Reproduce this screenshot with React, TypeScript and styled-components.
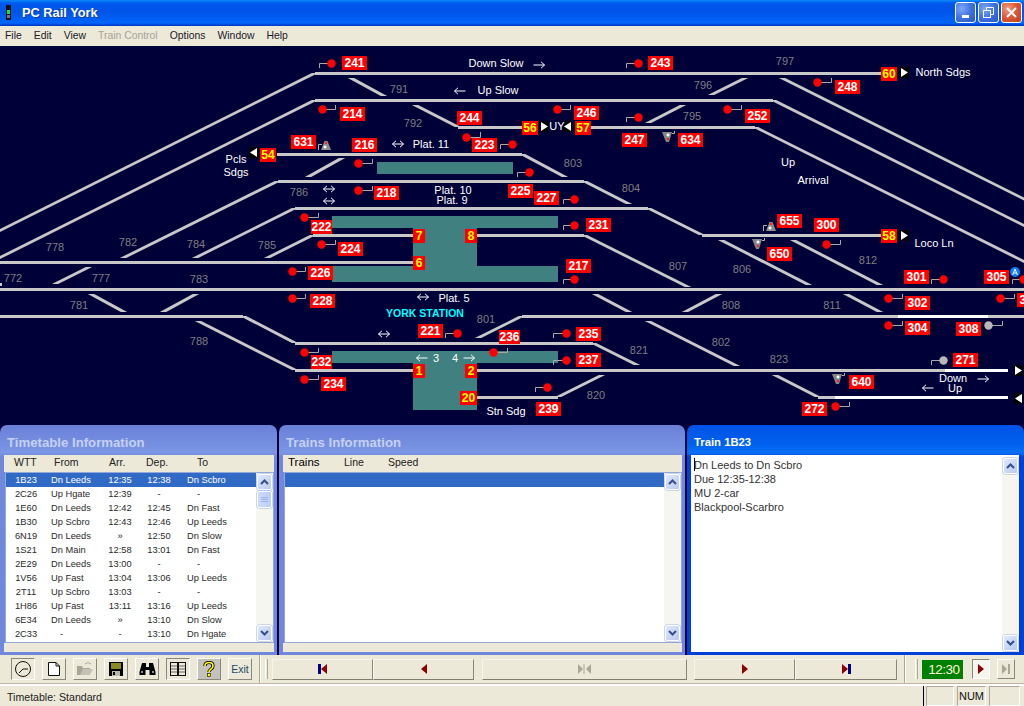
import React from "react";
import styled, { createGlobalStyle, css } from "styled-components";

const Global = createGlobalStyle`
  html, body { margin: 0; padding: 0; background: #ece9d8; }
  * { box-sizing: border-box; }
  body { font-family: "Liberation Sans", Arial, sans-serif; overflow: hidden; }
`;

const Win = styled.div`
  width: 1024px; height: 706px; display: flex; flex-direction: column; overflow: hidden; background: #ece9d8;
`;
const TitleBar = styled.div`
  height: 26px; flex: none; display: flex; align-items: center; padding: 0 2px 1px 5px;
  background: linear-gradient(180deg,#0a8cf8 0,#0058ee 12%,#0054e8 45%,#0064fb 86%,#005af0 92%,#0040cc 96%,#003cc4 100%);
`;
const TitleText = styled.div`
  font-weight: bold; font-size: 12.8px; color: #fff; margin-left: 9px; flex: 1; text-shadow: 1px 1px 0 #0a3ca8;
`;
const WinBtn = styled.div<{ $close?: boolean }>`
  width: 21px; height: 21px; margin-left: 2px; border: 1px solid #fff; border-radius: 3px; display: flex; align-items: center; justify-content: center;
  background: ${p => p.$close
    ? "radial-gradient(circle at 30% 30%, #f0a088 0, #dc5a38 45%, #c03c18 100%)"
    : "radial-gradient(circle at 30% 30%, #7ea8f4 0, #3f72e0 50%, #2a55c8 100%)"};
`;
const MenuBar = styled.div`
  height: 20px; flex: none; display: flex; gap: 12px; align-items: center; padding: 0 0 1px 5px; font-size: 10.4px; color: #1a1a2a; background: #ece9d8;
`;
const MenuItem = styled.span<{ $off?: boolean }>`
  color: ${p => p.$off ? "#a5a39a" : "#1a1a2a"};
`;

const Canvas = styled.div`
  height: 379px; flex: none; position: relative; overflow: hidden; background: #000038;
`;
const Drawing = styled.svg`
  position: absolute; left: 0; top: 0; width: 1024px; height: 379px;
`;
const Tag = styled.div.attrs<{ $x: number; $y: number; $w?: number }>(p => ({
  style: { left: p.$x, top: p.$y - 46, width: p.$w ?? 25 },
}))<{ $x: number; $y: number; $w?: number; $gold?: boolean }>`
  position: absolute; height: 14px; background: #ff0000; text-align: center; font-weight: bold; font-size: 12px; line-height: 14px;
  color: ${p => p.$gold ? "#ffff00" : "#fff"};
`;
const Caption = styled.div.attrs<{ $x: number; $y: number }>(p => ({
  style: { left: p.$x, top: p.$y - 46 },
}))<{ $x: number; $y: number; $kind?: "num" | "cyan" }>`
  position: absolute; transform: translate(-50%, -50%); white-space: nowrap; font-size: 11px; line-height: 12px;
  color: ${p => p.$kind === "num" ? "#7f7f7f" : p.$kind === "cyan" ? "#00ffff" : "#fff"};
  ${p => p.$kind === "cyan" && css`font-weight: bold; font-size: 10.5px;`}
`;

const PanelRow = styled.div`
  height: 230px; flex: none; display: flex; gap: 2px; background: #000038;
`;
const Panel = styled.div<{ $w: number; $active?: boolean }>`
  width: ${p => p.$w}px; flex: none; display: flex; flex-direction: column; border-radius: 7px 7px 0 0; padding: 0 3px 3px 4px;
  background: ${p => p.$active
    ? "linear-gradient(180deg,#0052e6 0,#0062ee 9%,#0a70f6 12%,#0040d8 14%,#0040d8 100%)"
    : "linear-gradient(180deg,#6a80d8 0,#7a96e4 12%,#6f88dc 14%,#6f88dc 100%)"};
`;
const PanelTitle = styled.div<{ $active?: boolean }>`
  height: 30px; flex: none; display: flex; align-items: center; padding: 4px 0 0 ${p => p.$active ? 3 : 3}px; font-weight: bold;
  font-size: ${p => p.$active ? "11.3px" : "13.2px"};
  color: ${p => p.$active ? "#fff" : "#c5d0f2"};
`;
const ColHead = styled.div`
  height: 17px; flex: none; display: flex; align-items: center; padding-bottom: 3px; background: #ece9d8; font-size: 10.5px; color: #222;
`;
const HeadCell = styled.span<{ $w?: number; $pad?: number; $strong?: boolean }>`
  width: ${p => p.$w ? `${p.$w}px` : "auto"};
  padding-left: ${p => p.$pad ?? 0}px;
  ${p => p.$strong && css`color: #000; font-size: 11.5px;`}
  flex: none;
`;
const ListWrap = styled.div`
  flex: 1; min-height: 0; display: flex; background: #fff; border: 1px solid #93a8d8; margin: 0 0 0 1px;
`;
const Rows = styled.div`
  flex: 1; min-width: 0;
`;
const Row = styled.div<{ $sel?: boolean }>`
  height: 14px; display: grid; grid-template-columns: 40px 50px 48px 30px 1fr; align-items: center; font-size: 9.3px; margin-left: 0;
  background: ${p => p.$sel ? "#316ac5" : "transparent"};
  color: ${p => p.$sel ? "#fff" : "#2a2a2a"};
`;
const Mid = styled.span`
  text-align: center;
`;
const Lft = styled.span<{ $pad: number }>`
  padding-left: ${p => p.$pad}px; white-space: nowrap;
`;
const BlankSel = styled.div`
  height: 14px; background: #316ac5;
`;
const Strip = styled.div`
  height: 9px; flex: none; background: #ece9d8; border-left: 1px solid #ece9d8;
`;
const SB = styled.div`
  width: 17px; flex: none; display: flex; flex-direction: column; background: #f6f6f0; padding: 1px;
`;
const SBBtn = styled.div`
  width: 15px; height: 16px; flex: none; display: flex; align-items: center; justify-content: center; border: 1px solid #fff; border-radius: 2px;
  background: linear-gradient(135deg,#dfe8fb,#b8c9f0);
  box-shadow: 0 0 0 0.5px #9db4e6;
`;
const SBTrack = styled.div`
  flex: 1; min-height: 0;
`;
const SBThumb = styled.div`
  width: 15px; height: 17px; margin-top: 1px; border: 1px solid #fff; border-radius: 2px; background: linear-gradient(90deg,#cddafa,#bccdf4);
  box-shadow: 0 0 0 0.5px #9db4e6; display: flex; flex-direction: column; align-items: center; justify-content: center; gap: 1px;
  i { display: block; width: 7px; height: 1px; background: #eef3ff; border-bottom: 1px solid #9fb4e6; }
`;
const NoteBox = styled.div`
  flex: 1; min-height: 0; display: flex; background: #fff; margin-right: 2px; border-top: 2px solid #fff;
`;
const Note = styled.div`
  flex: 1; padding: 1px 0 0 3px; font-size: 11px; line-height: 14px; color: #333;
`;
const NoteLine = styled.div`
  white-space: nowrap;
`;
const Caret = styled.span`
  display: inline-block; width: 1px; height: 13px; background: #000; vertical-align: -2px; margin-right: -1px;
`;

const Tools = styled.div`
  height: 29px; flex: none; display: flex; align-items: center; background: #ece9d8; border-bottom: 1px solid #b8b5a2; box-shadow: 0 1px 0 #fff;
`;
const ToolGroup = styled.div`
  width: 252px; padding-left: 11px; display: flex; gap: 7px; flex: none;
`;
const ToolBtn = styled.div<{ $down?: boolean; $hatch?: boolean }>`
  width: 24px; height: 22px; display: flex; align-items: center; justify-content: center; font-size: 10.5px; color: #1c4a6a;
  border: 1px solid; border-color: ${p => p.$down ? "#8a887c #fff #fff #8a887c" : "#fff #8a887c #8a887c #fff"};
  background: ${p => p.$hatch ? "#c4c2bb" : "#ece9d8"};
`;
const Divider = styled.div<{ $ml: number }>`
  width: 2px; height: 28px; flex: none; margin-left: ${p => p.$ml}px; border-left: 1px solid #aca899; border-right: 1px solid #fff;
`;
const Grip = styled.div<{ $ml: number }>`
  width: 3px; height: 20px; flex: none; margin-left: ${p => p.$ml}px; border-left: 1px solid #fff; border-right: 1px solid #aca899;
`;
const NavBtn = styled.div<{ $w: number; $ml?: number }>`
  width: ${p => p.$w}px; height: 21px; flex: none; margin-left: ${p => p.$ml ?? 0}px; display: flex; align-items: center; justify-content: center;
  border: 1px solid; border-color: #f6f5ee #8a887c #7f7d70 #f6f5ee; background: #ece9d8;
`;
const Clock = styled.div`
  width: 41px; height: 19px; flex: none; margin-left: 4px; padding-left: 3px; background: #008000; color: #fff8d8; font-size: 13.5px; letter-spacing: -.5px;
  display: flex; align-items: center; justify-content: center;
`;
const RunBtn = styled.div<{ $ml: number; $down?: boolean }>`
  width: 18px; height: 20px; flex: none; margin-left: ${p => p.$ml}px; display: flex; align-items: center; justify-content: center; border: 1px solid;
  border-color: ${p => p.$down ? "#8a887c #fff #fff #8a887c" : "#fff #8a887c #8a887c #fff"};
  background: ${p => p.$down ? "#f6f5ee" : "#ece9d8"};
`;
const Status = styled.div`
  height: 21px; flex: none; display: flex; align-items: center; margin-top: 1px; font-size: 10.6px; color: #222; background: #ece9d8; border-top: 1px solid #fff;
`;
const StatusMain = styled.div`
  width: 924px; padding: 2px 0 0 7px; flex: none; height: 100%; display: flex; align-items: center; border-right: 1px solid #000;
`;
const Pane = styled.div<{ $w: number; $ml: number }>`
  width: ${p => p.$w}px; height: 100%; flex: none; margin-left: ${p => p.$ml}px; border: 1px solid; border-color: #aca899 #fff #fff #aca899;
  display: flex; align-items: center; justify-content: center; font-size: 11px; color: #111;
`;

type D = [number, number, number, number];
const diags: D[] = [
  [315,73,-5,233],[315,100,-5,260],[278,181,123,258],[295,208,195,258],[313,235,267,258],
  [342,158,308,177],[351,78,384,96],[415,105,458,127],[522,154,565,177],[584,181,629,204],
  [648,208,702,235],[584,235,688,287],[773,100,1033,230],[755,127,1035,267],[782,78,1040,207],
  [711,95,745,78],[648,123,683,105],[55,284,89,267],[91,294,124,312],[163,312,196,294],
  [595,294,629,312],[685,312,719,294],[846,294,880,312],[721,240,809,285],[793,240,880,285],
  [648,321,737,366],[775,375,818,397],[593,343,637,365],[243,316,295,343],[295,370,198,321],
  [522,316,478,338],[558,397,602,375],
];
type H = [number, number, number, boolean?];
const horiz: H[] = [
  [315,881,73],[315,773,100],[458,522,127],[591,755,127],[277,522,154],[278,584,181],[295,648,208],
  [313,413,235],[477,584,235],[702,881,235],[0,413,262],[0,1024,289],[0,243,316],[522,898,316],
  [898,988,316,true],[988,1024,316],[295,593,343],[295,413,370],[477,945,370],[945,1008,370,true],
  [477,558,397],[818,835,397],[835,1008,397,true],[0,2,284],
];
const plats: D[] = [[377,162,136,12],[332,216,226,12],[413,228,64,38],[332,266,226,16],[332,351,226,12],[413,351,64,59]];
type S = [number, number, number, number, boolean?];
const signals: S[] = [
  [331,63,319,68],[322,109,335,105],[638,63,626,68],[557,109,570,105],[466,137,480,132],[512,144,500,149],
  [638,117,626,122],[358,163,372,159],[529,172,517,177],[358,190,372,186],[574,199,563,204],[574,225,563,230],
  [817,82,831,78],[727,109,741,105],[304,217,318,213],[321,244,335,240],[292,271,305,267],[292,298,305,294],
  [304,352,318,348],[304,379,318,375],[574,279,563,284],[457,333,445,338],[493,352,507,348],[566,333,553,338],
  [566,360,553,365],[547,387,535,392],[826,244,840,240],[943,279,931,284],[1023,279,1012,284],[888,298,902,294],
  [1000,298,1014,294],[888,325,902,321],[988,325,1002,321,true],[943,360,931,365,true],[835,406,849,402],
];
type T = [string, number, number, number?, boolean?];
const tags: T[] = [
  ["241",342,56],["243",648,56],["214",340,107],["246",574,106],["244",457,111],["56",522,121,16,true],["57",575,121,16,true],
  ["247",622,133],["223",472,138],["216",352,138],["218",374,186],["225",508,184],["227",534,191],["231",586,218],["631",291,135],
  ["54",260,148,16,true],["60",881,67,16,true],["248",835,80],["252",745,109],["634",678,133],["222",311,220,21],["224",338,242],
  ["226",308,266],["228",310,294],["232",311,355,21],["234",321,377],["7",413,229,12,true],["8",465,229,12,true],["6",413,256,12,true],
  ["1",413,364,12,true],["2",465,364,12,true],["20",460,391,17,true],["217",566,259],["221",418,324],["236",499,330,21],["235",576,327],
  ["237",576,353],["239",536,402],["655",777,214],["300",814,218],["58",881,229,16,true],["650",767,247],["301",904,270],["305",984,270],
  ["302",905,296],["303",1017,293],["304",905,321],["308",956,322],["271",953,353],["640",849,375],["272",802,402],
];
const nums: [string, number, number][] = [
  ["791",399,89],["792",413,123],["803",573,163],["804",631,188],["797",785,61],["796",703,85],["795",692,116],["786",299,192],
  ["778",55,247],["782",128,242],["784",196,244],["785",267,245],["772",13,278],["777",101,278],["783",199,279],["781",79,305],
  ["788",199,341],["801",486,319],["821",639,350],["820",596,395],["807",678,266],["806",742,269],["812",868,260],["808",731,305],
  ["811",832,305],["802",721,342],["823",779,359],
];
const words: [string, number, number][] = [
  ["Down Slow",496,63],["Up Slow",498,90],["UY",557,126],["Plat. 11",431,144],["Plat. 10",453,190],["Plat. 9",452,200],
  ["North Sdgs",943,72],["Up",788,162],["Arrival",813,180],["Pcls",236,159],["Sdgs",236,172],["Loco Ln",934,243],["Plat. 5",454,298],
  ["3",436,358],["4",455,358],["Stn Sdg",506,411],["Down",953,378],["Up",955,388],
];
type A = [number, number, "l" | "r" | "b"];
const arrows: A[] = [
  [539,65,"r"],[460,91,"l"],[398,144,"b"],[329,189,"b"],[329,201,"b"],[423,297,"b"],[384,334,"b"],[422,358,"l"],[469,358,"r"],[983,379,"r"],[928,388,"l"],
];
type E = [number, number, "l" | "r"];
const ends: E[] = [[250,148,"l"],[541,122,"r"],[564,122,"l"],[901,68,"r"],[901,231,"r"],[1015,366,"r"],[1015,394,"l"]];
const shunts: [number, number, boolean][] = [[326,146,true],[771,227,true],[667,137,false],[757,244,false],[837,379,false]];

const Arrow = ({ a }: { a: A }) => {
  const [x, y, d] = a;
  const l = x - 5.5, r = x + 5.5;
  const head = (tip: number, s: number) => `M${tip + s * 3.5} ${y - 3.2}L${tip} ${y}L${tip + s * 3.5} ${y + 3.2}`;
  return (
    <path fill="none" stroke="#fff" strokeWidth="1"
      d={`M${l} ${y}H${r}${d !== "r" ? head(l, 1) : ""}${d !== "l" ? head(r, -1) : ""}`} />
  );
};
const EndMark = ({ e }: { e: E }) => {
  const [x, y, d] = e;
  const pts = d === "r" ? `${x},${y} ${x + 7},${y + 4.5} ${x},${y + 9}` : `${x + 7},${y} ${x},${y + 4.5} ${x + 7},${y + 9}`;
  return (
    <g>
      <rect x={x - 1} y={y - 1} width={9} height={11} fill="#000" />
      <polygon points={pts} fill="#fff" />
    </g>
  );
};
const Shunt = ({ s }: { s: [number, number, boolean] }) => {
  const [x, y, up] = s;
  return up ? (
    <g>
      <polygon points={`${x - 1.5},${y - 5} ${x + 1.5},${y - 5} ${x + 5},${y + 4} ${x - 5},${y + 4}`} fill="#8c8c8c" />
      <path d={`M${x - 4} ${y - 1.5}H${x - 7.5}V${y + 4}`} fill="none" stroke="#b0b0b0" strokeWidth="1" />
      <rect x={x - 1} y={y - 4} width={2} height={2} fill="#ff2020" />
      <rect x={x - 2} y={y} width={2} height={2} fill="#fff" />
      <path d={`M${x - 3} ${y + 1}H${x + 1}M${x - 1} ${y - 1}V${y + 3}`} stroke="#fff" strokeWidth=".7" />
    </g>
  ) : (
    <g>
      <polygon points={`${x - 5},${y - 5} ${x + 5},${y - 5} ${x + 2},${y + 5} ${x - 1},${y + 5}`} fill="#858585" />
      <path d={`M${x + 5} ${y - 3.5}H${x + 7.5}V${y - 6}`} fill="none" stroke="#b0b0b0" strokeWidth="1" />
      <rect x={x} y={y - 3} width={2} height={2} fill="#fff" />
      <path d={`M${x - 1} ${y - 2}H${x + 3}M${x + 1} ${y - 4}V${y}`} stroke="#fff" strokeWidth=".7" />
      <rect x={x} y={y + 1} width={2} height={2} fill="#ff2020" />
    </g>
  );
};

const Rail = () => (
  <Drawing viewBox="0 46 1024 379">
    {plats.map(([x, y, w, h], i) => <rect key={i} x={x} y={y} width={w} height={h} fill="#408080" />)}
    {horiz.map(([a, b, y, w], i) => <rect key={i} x={a} y={y - 1} width={b - a} height={3} fill={w ? "#fff" : "#c8c8c8"} />)}
    {diags.map(([a, b, c, d], i) => (
      <polygon key={i} fill="#c8c8c8" points={`${a - 3.2},${b} ${a + 3.2},${b} ${c + 3.2},${d} ${c - 3.2},${d}`} />
    ))}
    {signals.map(([x, y, px, t, g], i) => {
      const col = g ? "#b8b8b8" : "#ff0000";
      return (
        <g key={i}>
          <path d={`M${x} ${y + .5}H${px + .5}V${t}`} fill="none" stroke="#a8a8a8" strokeWidth="1" />
          <circle cx={x + .5} cy={y + .5} r={4.2} fill={col} />
        </g>
      );
    })}
    {shunts.map((s, i) => <Shunt key={i} s={s} />)}
    {arrows.map((a, i) => <Arrow key={i} a={a} />)}
    {ends.map((e, i) => <EndMark key={i} e={e} />)}
    <circle cx="1015" cy="272" r="5" fill="#0a7cff" />
    <path d="M1012.6 275L1015 269L1017.4 275M1013.5 273H1016.5" fill="none" stroke="#fff" strokeWidth="1" />
  </Drawing>
);

const rows = [
  ["1B23","Dn Leeds","12:35","12:38","Dn Scbro"],["2C26","Up Hgate","12:39","-","-"],["1E60","Dn Leeds","12:42","12:45","Dn Fast"],
  ["1B30","Up Scbro","12:43","12:46","Up Leeds"],["6N19","Dn Leeds","»","12:50","Dn Slow"],["1S21","Dn Main","12:58","13:01","Dn Fast"],
  ["2E29","Dn Leeds","13:00","-","-"],["1V56","Up Fast","13:04","13:06","Up Leeds"],["2T11","Up Scbro","13:03","-","-"],
  ["1H86","Up Fast","13:11","13:16","Up Leeds"],["6E34","Dn Leeds","»","13:10","Dn Slow"],["2C33","-","-","13:10","Dn Hgate"],
];

const Chevron = ({ up }: { up?: boolean }) => (
  <svg width="9" height="6" viewBox="0 0 9 6">
    <path d={up ? "M1 5L4.5 1.5L8 5" : "M1 1L4.5 4.5L8 1"} fill="none" stroke="#34508c" strokeWidth="2" />
  </svg>
);
const Scroll = ({ thumb }: { thumb?: boolean }) => (
  <SB>
    <SBBtn><Chevron up /></SBBtn>
    <SBTrack>{thumb && <SBThumb><i /><i /><i /></SBThumb>}</SBTrack>
    <SBBtn><Chevron /></SBBtn>
  </SB>
);

const Nav = ({ kind }: { kind: "first" | "prev" | "mid" | "next" | "last" }) => {
  const red = "#8b0000", blue = "#000088", g = "#a8a698";
  return (
    <svg width="14" height="10" viewBox="0 0 14 10">
      {kind === "first" && <><rect x="2" y="0" width="3" height="10" fill={blue} /><polygon points="11,0 11,10 5,5" fill={red} /></>}
      {kind === "prev" && <polygon points="10,0 10,10 4,5" fill={red} />}
      {kind === "mid" && <><polygon points="0,0 0,10 5,5" fill={g} /><rect x="5.5" y="0" width="1" height="10" fill={g} /><polygon points="8,5 13,0 13,10" fill={g} /></>}
      {kind === "next" && <polygon points="4,0 4,10 10,5" fill={red} />}
      {kind === "last" && <><polygon points="3,0 3,10 9,5" fill={red} /><rect x="9" y="0" width="3" height="10" fill={blue} /></>}
    </svg>
  );
};

export default function App() {
  return (
    <Win>
      <Global />
      <TitleBar>
        <svg width="8" height="16" viewBox="0 0 8 16">
          <rect x="1" y="0" width="5" height="15" fill="#111" />
          <rect x="2" y="5" width="3" height="4" fill="#20e040" />
          <rect x="2" y="10" width="3" height="3" fill="#777" />
        </svg>
        <TitleText>PC Rail York</TitleText>
        <WinBtn><svg width="12" height="12"><rect x="2" y="8" width="7" height="3" fill="#fff" /></svg></WinBtn>
        <WinBtn><svg width="13" height="13" fill="none" stroke="#fff"><rect x="1.5" y="4.5" width="7" height="7" /><path d="M4.5 4V1.5H11.5V8.5H9" /></svg></WinBtn>
        <WinBtn $close><svg width="13" height="13"><path d="M2 2L11 11M11 2L2 11" stroke="#fff" strokeWidth="2" /></svg></WinBtn>
      </TitleBar>
      <MenuBar>
        <MenuItem>File</MenuItem><MenuItem>Edit</MenuItem><MenuItem>View</MenuItem>
        <MenuItem $off>Train Control</MenuItem><MenuItem>Options</MenuItem><MenuItem>Window</MenuItem><MenuItem>Help</MenuItem>
      </MenuBar>
      <Canvas>
        <Rail />
        {tags.map(([t, x, y, w, g]) => <Tag key={t} $x={x} $y={y} $w={w} $gold={g}>{t}</Tag>)}
        {nums.map(([t, x, y]) => <Caption key={t} $x={x} $y={y} $kind="num">{t}</Caption>)}
        {words.map(([t, x, y], i) => <Caption key={i} $x={x} $y={y}>{t}</Caption>)}
        <Caption $x={425} $y={313} $kind="cyan">YORK STATION</Caption>
      </Canvas>
      <PanelRow>
        <Panel $w={277}>
          <PanelTitle>Timetable Information</PanelTitle>
          <ColHead>
            <HeadCell $w={50} $pad={10}>WTT</HeadCell><HeadCell $w={55}>From</HeadCell><HeadCell $w={37}>Arr.</HeadCell><HeadCell $w={51}>Dep.</HeadCell><HeadCell>To</HeadCell>
          </ColHead>
          <ListWrap>
            <Rows>
              {rows.map((r, i) => (
                <Row key={i} $sel={i === 0}>
                  <Mid>{r[0]}</Mid>
                  <Lft $pad={r[1] === "-" ? 14 : 5}>{r[1]}</Lft>
                  <Mid>{r[2]}</Mid>
                  <Mid>{r[3]}</Mid>
                  <Lft $pad={r[4] === "-" ? 23 : 13}>{r[4]}</Lft>
                </Row>
              ))}
            </Rows>
            <Scroll thumb />
          </ListWrap>
          <Strip />
        </Panel>
        <Panel $w={406}>
          <PanelTitle>Trains Information</PanelTitle>
          <ColHead>
            <HeadCell $w={61} $pad={5} $strong>Trains</HeadCell><HeadCell $w={44}>Line</HeadCell><HeadCell>Speed</HeadCell>
          </ColHead>
          <ListWrap>
            <Rows><BlankSel /></Rows>
            <Scroll />
          </ListWrap>
          <Strip />
        </Panel>
        <Panel $w={337} $active>
          <PanelTitle $active>Train 1B23</PanelTitle>
          <NoteBox>
            <Note>
              <NoteLine><Caret />Dn Leeds to Dn Scbro</NoteLine>
              <NoteLine>Due 12:35-12:38</NoteLine>
              <NoteLine>MU 2-car</NoteLine>
              <NoteLine>Blackpool-Scarbro</NoteLine>
            </Note>
            <Scroll />
          </NoteBox>
        </Panel>
      </PanelRow>
      <Tools>
        <ToolGroup>
          <ToolBtn $down>
            <svg width="18" height="18" viewBox="0 0 18 18" fill="none" stroke="#111"><circle cx="9" cy="9" r="7.5" /><path d="M9 9H14M9 9L5 13" /></svg>
          </ToolBtn>
          <ToolBtn>
            <svg width="12" height="14" viewBox="0 0 12 14" fill="#fff" stroke="#111"><path d="M.5 .5H8L11.5 4V13.5H.5Z" /><path d="M8 .5V4H11.5" fill="none" /></svg>
          </ToolBtn>
          <ToolBtn>
            <svg width="18" height="16" viewBox="0 0 18 16"><path d="M1 5H6L7 7H14V14H1Z" fill="#a8a698" /><path d="M4 14L7 8H17L14 14Z" fill="#c4c2b4" /><path d="M9 3Q12 0 15 3" stroke="#a8a698" fill="none" /></svg>
          </ToolBtn>
          <ToolBtn>
            <svg width="16" height="16" viewBox="0 0 16 16"><rect x="1" y="1" width="14" height="14" fill="#000" /><rect x="3" y="2" width="10" height="6" fill="#8a8a20" /><rect x="4" y="10" width="8" height="5" fill="#b8b8a8" /><rect x="5" y="11" width="2" height="3" fill="#000" /></svg>
          </ToolBtn>
          <ToolBtn>
            <svg width="17" height="14" viewBox="0 0 17 14"><path d="M3 1H7V5H10V1H14L16.5 10V13H10.5V8H6.5V13H.5V10Z" fill="#000" /><rect x="2" y="9" width="2" height="2" fill="#8090a8" /><rect x="13" y="9" width="2" height="2" fill="#8090a8" /></svg>
          </ToolBtn>
          <ToolBtn $down>
            <svg width="18" height="16" viewBox="0 0 18 16" fill="#ece9d8" stroke="#111"><rect x="1.5" y="1.5" width="7" height="13" /><rect x="9.5" y="1.5" width="7" height="13" /><path d="M2 5H8M2 8H8M2 11H8M10 5H16M10 8H16M10 11H16" strokeWidth=".6" /></svg>
          </ToolBtn>
          <ToolBtn $hatch>
            <svg width="12" height="16" viewBox="0 0 12 16"><path d="M2 5Q2 1.5 6 1.5Q10 1.5 10 5Q10 7 7.5 8.5Q6 9.5 6 11" fill="none" stroke="#000" strokeWidth="3.2" /><path d="M2 5Q2 1.5 6 1.5Q10 1.5 10 5Q10 7 7.5 8.5Q6 9.5 6 11" fill="none" stroke="#ffff00" strokeWidth="1.6" /><rect x="4.5" y="12.5" width="3" height="3" fill="#ffff00" stroke="#000" strokeWidth=".6" /></svg>
          </ToolBtn>
          <ToolBtn>Exit</ToolBtn>
        </ToolGroup>
        <Divider $ml={7} />
        <Grip $ml={4} />
        <NavBtn $w={101} $ml={4}><Nav kind="first" /></NavBtn>
        <NavBtn $w={101}><Nav kind="prev" /></NavBtn>
        <NavBtn $w={205} $ml={8}><Nav kind="mid" /></NavBtn>
        <NavBtn $w={101} $ml={7}><Nav kind="next" /></NavBtn>
        <NavBtn $w={102}><Nav kind="last" /></NavBtn>
        <Divider $ml={7} />
        <Grip $ml={9} />
        <Clock>12:30</Clock>
        <RunBtn $ml={9} $down><svg width="8" height="10"><polygon points="1,0 1,10 7,5" fill="#8b0000" /></svg></RunBtn>
        <RunBtn $ml={7}><svg width="10" height="10"><polygon points="1,0 1,10 6,5" fill="#a8a698" /><rect x="7" y="0" width="2" height="10" fill="#a8a698" /></svg></RunBtn>
      </Tools>
      <Status>
        <StatusMain>Timetable: Standard</StatusMain>
        <Pane $w={28} $ml={2} />
        <Pane $w={29} $ml={3}>NUM</Pane>
        <Pane $w={31} $ml={3} />
      </Status>
    </Win>
  );
}
